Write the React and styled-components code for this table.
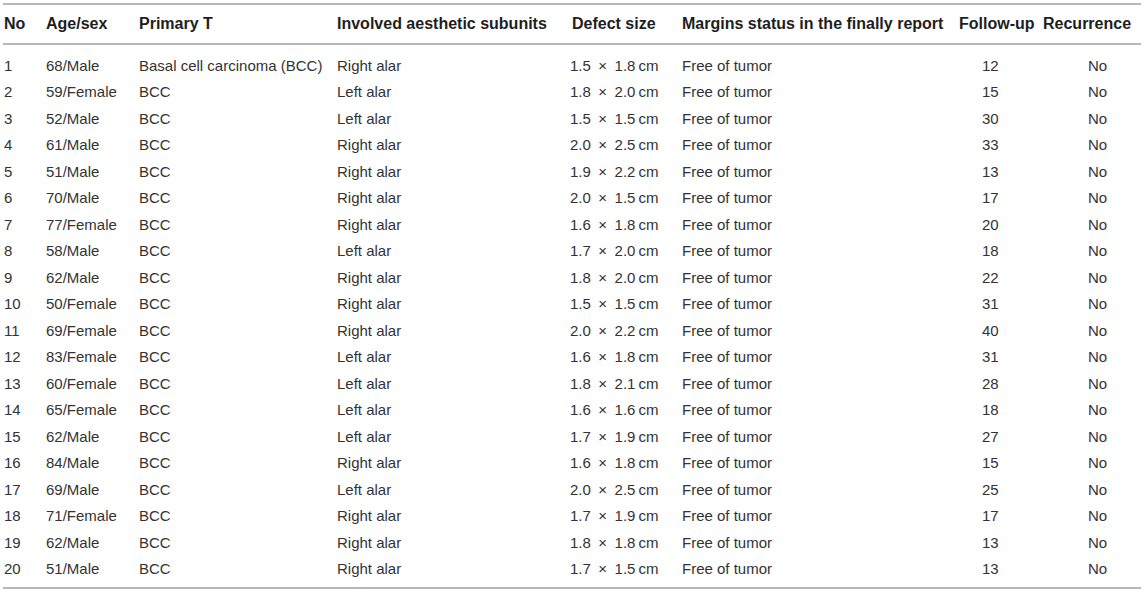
import styled, { createGlobalStyle } from 'styled-components';

const GlobalStyle = createGlobalStyle`
  body {
    margin: 0;
    background: #ffffff;
    font-family: "Liberation Sans", Arial, Helvetica, sans-serif;
  }
`;

const columns = [
  { key: 'no', label: 'No', width: 42 },
  { key: 'age', label: 'Age/sex', width: 93 },
  { key: 'primary', label: 'Primary T', width: 198 },
  { key: 'subunit', label: 'Involved aesthetic subunits', width: 233 },
  { key: 'defect', label: 'Defect size', width: 112, headIndent: 2 },
  { key: 'margins', label: 'Margins status in the finally report', width: 277 },
  { key: 'follow', label: 'Follow-up', width: 84, indent: 23 },
  { key: 'recur', label: 'Recurrence', width: 98, indent: 45 },
];

const raw = [
  ['68/Male', 'Basal cell carcinoma (BCC)', 'Right alar', '1.5', '1.8', 12],
  ['59/Female', 'BCC', 'Left alar', '1.8', '2.0', 15],
  ['52/Male', 'BCC', 'Left alar', '1.5', '1.5', 30],
  ['61/Male', 'BCC', 'Right alar', '2.0', '2.5', 33],
  ['51/Male', 'BCC', 'Right alar', '1.9', '2.2', 13],
  ['70/Male', 'BCC', 'Right alar', '2.0', '1.5', 17],
  ['77/Female', 'BCC', 'Right alar', '1.6', '1.8', 20],
  ['58/Male', 'BCC', 'Left alar', '1.7', '2.0', 18],
  ['62/Male', 'BCC', 'Right alar', '1.8', '2.0', 22],
  ['50/Female', 'BCC', 'Right alar', '1.5', '1.5', 31],
  ['69/Female', 'BCC', 'Right alar', '2.0', '2.2', 40],
  ['83/Female', 'BCC', 'Left alar', '1.6', '1.8', 31],
  ['60/Female', 'BCC', 'Left alar', '1.8', '2.1', 28],
  ['65/Female', 'BCC', 'Left alar', '1.6', '1.6', 18],
  ['62/Male', 'BCC', 'Left alar', '1.7', '1.9', 27],
  ['84/Male', 'BCC', 'Right alar', '1.6', '1.8', 15],
  ['69/Male', 'BCC', 'Left alar', '2.0', '2.5', 25],
  ['71/Female', 'BCC', 'Right alar', '1.7', '1.9', 17],
  ['62/Male', 'BCC', 'Right alar', '1.8', '1.8', 13],
  ['51/Male', 'BCC', 'Right alar', '1.7', '1.5', 13],
];

const rows = raw.map(([age, primary, subunit, a, b, follow], i) => ({
  no: i + 1,
  age,
  primary,
  subunit,
  defect: `${a}\u2002\u00d7\u2002${b}\u2009cm`,
  margins: 'Free of tumor',
  follow,
  recur: 'No',
}));

const template = columns.map((c) => `${c.width}px`).join(' ');

export default function App() {
  return (
    <>
      <GlobalStyle />
      <Page>
        <Table>
          <HeadRow>
            {columns.map((c) => (
              <HeadCell key={c.key} $indent={c.headIndent || 0}>
                {c.label}
              </HeadCell>
            ))}
          </HeadRow>
          <Body>
            {rows.map((r) => (
              <Row key={r.no}>
                {columns.map((c) => (
                  <Cell key={c.key} $indent={c.indent || 0}>
                    {r[c.key]}
                  </Cell>
                ))}
              </Row>
            ))}
          </Body>
        </Table>
      </Page>
    </>
  );
}

const Page = styled.div`
  width: 1145px;
  padding: 3px 4px 0 3px;
  box-sizing: border-box;
`;

const Table = styled.div`
  border-top: 2px solid #b8b8b8;
  border-bottom: 2px solid #b8b8b8;
`;

const HeadRow = styled.div`
  display: grid;
  grid-template-columns: ${template};
  height: 38px;
  align-items: center;
  padding-left: 1px;
  border-bottom: 2px solid #b8b8b8;
`;

const HeadCell = styled.div`
  padding-left: ${({ $indent }) => $indent}px;
  font-size: 16px;
  font-weight: bold;
  color: #1e1e1e;
  white-space: nowrap;
`;

const Body = styled.div`
  padding: 7.75px 0 4.25px 1px;
`;

const Row = styled.div`
  display: grid;
  grid-template-columns: ${template};
  height: 26.5px;
  align-items: center;
`;

const Cell = styled.div`
  padding-left: ${({ $indent }) => $indent}px;
  font-size: 15px;
  line-height: 26.5px;
  color: #333333;
  white-space: nowrap;
`;
